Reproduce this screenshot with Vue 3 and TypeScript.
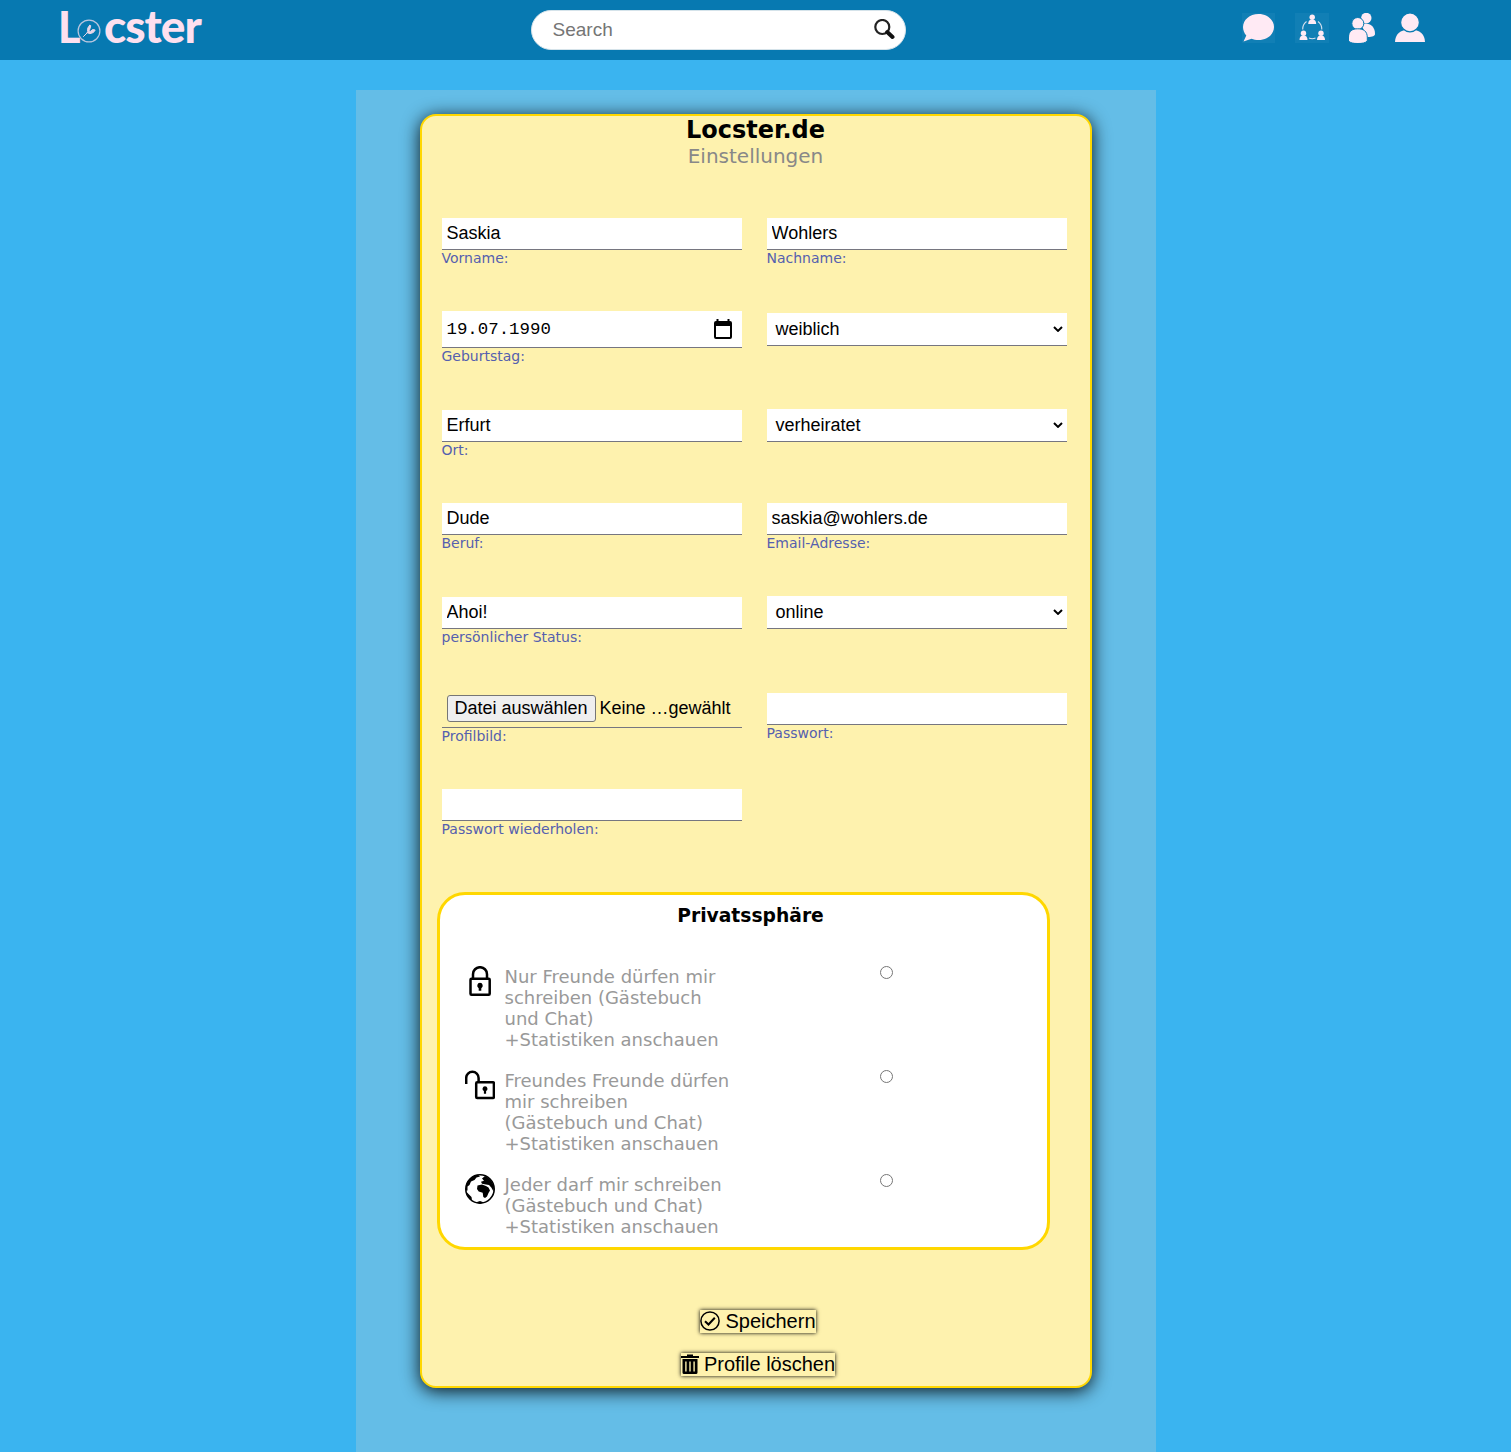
<script setup lang="ts">
import { ref } from 'vue'

interface Field {
  kind: 'text' | 'date' | 'select' | 'file' | 'password'
  value: string
  label?: string
}

const fields = ref<Field[]>([
  { kind: 'text', value: 'Saskia', label: 'Vorname:' },
  { kind: 'text', value: 'Wohlers', label: 'Nachname:' },
  { kind: 'date', value: '19.07.1990', label: 'Geburtstag:' },
  { kind: 'select', value: 'weiblich' },
  { kind: 'text', value: 'Erfurt', label: 'Ort:' },
  { kind: 'select', value: 'verheiratet' },
  { kind: 'text', value: 'Dude', label: 'Beruf:' },
  { kind: 'text', value: 'saskia@wohlers.de', label: 'Email-Adresse:' },
  { kind: 'text', value: 'Ahoi!', label: 'persönlicher Status:' },
  { kind: 'select', value: 'online' },
  { kind: 'file', value: '', label: 'Profilbild:' },
  { kind: 'password', value: '', label: 'Passwort:' },
  { kind: 'password', value: '', label: 'Passwort wiederholen:' },
])

const privacy = [
  { id: 'locked', lines: ['Nur Freunde dürfen mir', 'schreiben (Gästebuch', 'und Chat)', '+Statistiken anschauen'] },
  { id: 'unlocked', lines: ['Freundes Freunde dürfen', 'mir schreiben', '(Gästebuch und Chat)', '+Statistiken anschauen'] },
  { id: 'globe', lines: ['Jeder darf mir schreiben', '(Gästebuch und Chat)', '+Statistiken anschauen'] },
]
</script>

<template>
  <header class="topbar">
    <div class="logo">
      <span class="logo-l">L</span>
      <svg class="logo-o" width="24" height="24" viewBox="0 0 24 24">
        <circle cx="12" cy="12" r="10.900" fill="none" stroke="#b9c6df" stroke-width="1.200" />
        <path d="M6.200 17.800l4.500-4.500M10.500 12.500l.300-3.500 2-3 1 .8-1 3.400-1.500 3M9.800 13.500l3.700-1.200 2.200-1.800 2.500.500-1.800 2.500-3.500 1.200z" fill="#e9d6e8" stroke="#e9d6e8" stroke-width="1" />
      </svg>
      <span class="logo-rest">cster</span>
    </div>
    <div class="search">
      <input type="text" placeholder="Search" />
      <svg width="21" height="21" viewBox="0 0 21 21">
        <circle cx="8.300" cy="8" r="7" fill="none" stroke="#222" stroke-width="2.200" />
        <path d="M13.200 13l5.300 5" stroke="#111" stroke-width="4" stroke-linecap="round" />
      </svg>
    </div>
    <nav class="nav">
      <svg class="tile chat" width="33" height="30" viewBox="0 0 33 30">
        <path d="M16.500 1C25.500 1 32 7 32 14s-6.500 13-15.500 13c-2.500 0-5-.500-7-1.300L1.500 28.500l2.800-6C2.200 20.200 1 17.200 1 14 1 7 7.500 1 16.500 1z" />
      </svg>
      <svg class="tile net" width="34" height="30" viewBox="0 0 34 30">
        <circle cx="17.200" cy="4.300" r="2.700" />
        <path d="M13.200 11c0-3.200 1.500-4.500 4-4.500s4 1.300 4 4.500z" />
        <circle cx="8.500" cy="20.300" r="2.700" />
        <path d="M4.500 27c0-3.200 1.500-4.500 4-4.500s4 1.300 4 4.500z" />
        <circle cx="26" cy="20.300" r="2.700" />
        <path d="M22 27c0-3.200 1.500-4.500 4-4.500s4 1.300 4 4.500z" />
        <path class="arc" d="M11.500 8.500Q7.500 11.500 7.700 16.500M23 8.500q4 3 3.800 8M14 25q3.200 1.400 6.500 0" />
      </svg>
      <svg class="friends" width="26" height="30" viewBox="0 0 26 30">
        <circle cx="17.300" cy="5" r="5.200" />
        <path d="M12 11c8-2 14 1.500 14 10 0 2-3 3.200-8 3z" />
        <g class="front">
          <circle cx="8.800" cy="10.500" r="6" />
          <path d="M-.5 24.500c0-6.500 3.800-8.700 9.300-8.700s9.500 2.200 9.500 8.700v3.500c-2 2-5 2.500-9.500 2.500S1.500 30-.5 28z" />
        </g>
      </svg>
      <svg class="user" width="30" height="29" viewBox="0 0 30 29">
        <path d="M0 29c.3-7.500 4.500-12.500 15-12.500S29.700 21.500 30 29z" />
        <circle class="head" cx="15" cy="9.400" r="9.400" />
      </svg>
    </nav>
  </header>

  <main class="panel">
    <section class="card">
      <h1>Locster.de</h1>
      <p class="subtitle">Einstellungen</p>

      <form class="fields" @submit.prevent>
        <div v-for="(f, i) in fields" :key="i" class="field" :class="f.kind">
          <div v-if="f.kind === 'date'" class="control">
            <span>{{ f.value }}</span>
            <svg width="18" height="20" viewBox="0 0 18 20">
              <path d="M2.500 0h2v2h9V0h2v2h.5a2 2 0 0 1 2 2v14a2 2 0 0 1-2 2H2a2 2 0 0 1-2-2V4a2 2 0 0 1 2-2h.5zM2 7v11h14V7z" fill="#000" fill-rule="evenodd" />
            </svg>
          </div>
          <div v-else-if="f.kind === 'select'" class="control">
            <span>{{ f.value }}</span>
            <svg width="10" height="6" viewBox="0 0 10 6">
              <path d="M1 1l4 3.900L9 1" fill="none" stroke="#000" stroke-width="2" />
            </svg>
          </div>
          <div v-else-if="f.kind === 'file'" class="control">
            <button type="button">Datei auswählen</button><span>Keine …gewählt</span>
          </div>
          <input v-else v-model="f.value" class="control" :type="f.kind" />
          <label v-if="f.label">{{ f.label }}</label>
        </div>
      </form>

      <section class="privacy">
        <h2>Privatssphäre</h2>
        <div v-for="p in privacy" :key="p.id" class="option">
          <svg v-if="p.id === 'locked'" width="30" height="30" viewBox="0 0 30 30">
            <rect x="5.500" y="12.700" width="19.200" height="16" rx="1" class="line" />
            <path d="M8 12.500V8.200a7 7 0 0 1 14 0v4.300" class="line" />
            <path d="M15 16.800a2.900 2.900 0 0 1 1.300 5.400v2.600h-2.600v-2.600a2.900 2.900 0 0 1 1.300-5.400z" />
          </svg>
          <svg v-else-if="p.id === 'unlocked'" width="30" height="30" viewBox="0 0 30 30">
            <rect x="11.200" y="12.300" width="17.700" height="15.600" rx="1" class="line" />
            <path d="M1.200 14V8a6.200 6.200 0 0 1 12.400 0v4" class="line" />
            <path d="M20 16.200a2.600 2.600 0 0 1 1.100 4.900v2.700h-2.200v-2.700a2.600 2.600 0 0 1 1.100-4.900z" />
          </svg>
          <svg v-else width="30" height="30" viewBox="0 0 30 30">
            <circle cx="15" cy="15" r="14.200" fill="#fff" stroke="#000" stroke-width="1.600" />
            <path d="M1 12C2.500 6 7 1.500 13 .8l2 1.700-3.500 1L9.500 6 6 7.500 4.500 11l-2 1.500v4H1z" />
            <path d="M17 4.500L20 2c4.500 1.800 8 6 9 11l-.5 4.500-2.200-4-2.300-2.500-3-.5-4-.8-1-2 3-1z" />
            <path d="M12.500 11.500l4.500-1 4 1.500 2.500 1.500 1.500 3-1.500 2.500-1.500 3.500-2 1.500-1.700-1-.6-4.300-4-1.200-1.700-2.500z" />
            <path d="M1.500 18l2.500 2.500 2.500 2.500.5 3C4 24.500 2.200 22 1.500 18zM10.500 28.500l4.500-1.500 4 1.500-4 1.200z" />
          </svg>
          <p><template v-for="(line, n) in p.lines" :key="n">{{ line }}<br /></template></p>
          <input type="radio" name="privacy" :value="p.id" />
        </div>
      </section>

      <div class="actions">
        <button type="button">
          <svg width="20" height="20" viewBox="0 0 20 20">
            <circle cx="10" cy="10" r="9.100" fill="none" stroke="#000" stroke-width="1.500" />
            <path d="M5 10.200l3.500 3.300 6.300-6.800" fill="none" stroke="#000" stroke-width="2" />
          </svg>
          <span>Speichern</span>
        </button>
        <button type="button">
          <svg width="18" height="20" viewBox="0 0 18 20">
            <path d="M0 2h6V.5h6V2h6v2H0zM1.500 5h15v13.500a1.500 1.500 0 0 1-1.500 1.500H3a1.500 1.500 0 0 1-1.500-1.500zM4.200 7.500v10h1.400v-10zM8.300 7.500v10h1.400v-10zM12.400 7.500v10h1.400v-10z" fill-rule="evenodd" />
          </svg>
          <span>Profile löschen</span>
        </button>
      </div>
    </section>
  </main>
</template>

<style>
body {
  background: #3ab4f0;
}
</style>

<style scoped>
* {
  box-sizing: border-box;
}
.topbar {
  height: 60px;
  background: #0779b1;
  display: grid;
  grid-template-columns: 531px 375px 1fr;
  font-family: "Liberation Sans", Arial, sans-serif;
}
.logo {
  display: flex;
  align-items: baseline;
  padding-left: 58px;
  color: #fde0ef;
  font: 900 46px/52px Lato, sans-serif;
}
.logo-l {
  width: 19px;
  font-size: 43px;
}
.logo-o {
  margin-bottom: -1px;
}
.logo-rest {
  margin-left: 3px;
  letter-spacing: -1px;
}
.search {
  height: 40px;
  margin-top: 10px;
  display: flex;
  align-items: flex-start;
  background: #fff;
  border: 1px solid #d5e3ea;
  border-radius: 20px;
  padding: 8px 10px 0 20.5px;
}
.search input {
  flex: 1;
  min-width: 0;
  height: 22px;
  padding: 0;
  border: 0;
  outline: 0;
  font: 19px "Liberation Sans", Arial, sans-serif;
}
.search input::placeholder {
  color: #757575;
}
.nav {
  display: flex;
  align-items: flex-start;
  padding: 13px 0 0 336px;
  fill: #ffeaf4;
}
.nav svg {
  flex: none;
}
.tile {
  background: #117fb5;
}
.net {
  margin-left: 20px;
}
.arc {
  fill: none;
  stroke: #d5e0ef;
  stroke-width: 1.1;
}
.friends {
  margin-left: 20px;
}
.front {
  stroke: #0779b1;
  stroke-width: 1;
}
.user {
  margin-left: 20px;
}
.head {
  stroke: #0779b1;
  stroke-width: 1.2;
}
.panel {
  width: 800px;
  height: 1362px;
  margin: 30px auto 0;
  padding: 24px 64px;
  background: #64bde7;
  font-family: "DejaVu Sans", Verdana, sans-serif;
}
.card {
  height: 1274px;
  background: #fef2ae;
  border: 2px solid #ffd700;
  border-radius: 16px;
  box-shadow: 0 3px 18px rgba(0, 0, 0, 0.9);
}
h1 {
  margin: 0;
  text-align: center;
  font-size: 24px;
  line-height: 28px;
}
.subtitle {
  margin: 0;
  text-align: center;
  color: #888;
  font-size: 20px;
  line-height: 24px;
}
.fields {
  display: grid;
  grid-template-columns: 300px 300px;
  grid-template-rows: 93px 98px 94px 93px 97px 96px 103px;
  column-gap: 25px;
  padding: 50px 0 0 20px;
}
.field {
  display: flex;
  flex-direction: column;
}
.field:nth-child(5),
.field:nth-child(9) {
  padding-top: 1px;
}
.field:nth-child(4) {
  padding-top: 2px;
}
.control {
  width: 300px;
  height: 32px;
  padding: 0 5px;
  border: 0;
  border-bottom: 1px solid #767680;
  border-radius: 0;
  outline: 0;
  background: #fff;
  color: #000;
  font: 18px "Liberation Sans", Arial, sans-serif;
}
div.control {
  display: flex;
  align-items: center;
}
.date .control {
  height: 37px;
  justify-content: space-between;
  padding: 0 10px 0 5px;
  font: 17.4px "Liberation Mono", monospace;
}
.select .control {
  height: 33px;
  justify-content: space-between;
  padding: 0 4px 0 9px;
}
.file .control {
  height: 35px;
  background: none;
  padding: 0 0 4px 5px;
}
.file button {
  flex: none;
  width: 149px;
  height: 27px;
  margin-right: 4px;
  padding: 0;
  border: 1px solid #767676;
  border-radius: 3px;
  background: #efefef;
  color: #000;
  font: 18px "Liberation Sans", Arial, sans-serif;
}
.file span {
  white-space: nowrap;
}
label {
  color: #5560ae;
  font-size: 14px;
  line-height: 17px;
}
.privacy {
  width: 613px;
  height: 358px;
  margin: 0 0 0 15px;
  padding: 8px 25px 0;
  background: #fff;
  border: 3px solid #ffd700;
  border-radius: 28px;
}
h2 {
  margin: 0 0 38px;
  padding-left: 15px;
  text-align: center;
  font-size: 18.72px;
  line-height: 25px;
}
.option {
  display: flex;
  align-items: flex-start;
  margin-top: 3px;
  height: 101px;
}
.option .line {
  fill: none;
  stroke: #000;
  stroke-width: 2.5;
}
.option p {
  width: 366px;
  margin: 0 0 0 10px;
  color: #999;
  font-size: 18px;
  line-height: 21px;
}
.option input {
  width: 13px;
  height: 13px;
  margin: 0 0 0 9px;
}
.actions {
  display: flex;
  flex-direction: column;
  align-items: center;
  gap: 20px;
  padding: 60px 0 0 5px;
}
.actions button {
  display: flex;
  align-items: center;
  gap: 5px;
  height: 23px;
  padding: 0;
  border: 0;
  background: #fef2ae;
  box-shadow: 0 0 4px #000;
  color: #000;
  font: 20px "Liberation Sans", Arial, sans-serif;
}
.actions svg {
  margin-bottom: 2px;
}
</style>
